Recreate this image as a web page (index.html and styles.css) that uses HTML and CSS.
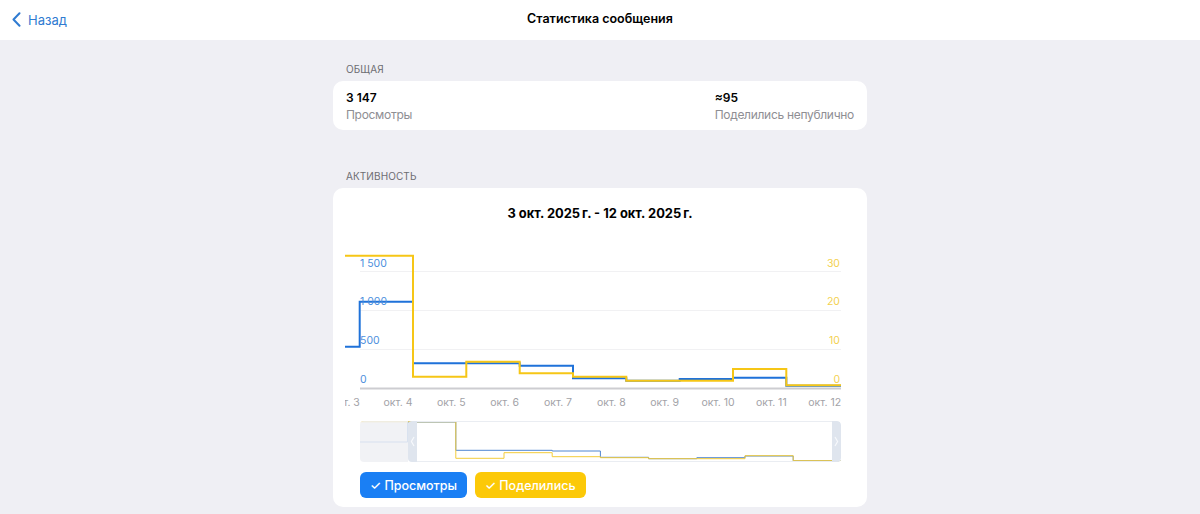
FILE: index.html
```html
<!DOCTYPE html>
<html lang="ru">
<head>
    <meta charset="UTF-8">
    <meta name="viewport" content="width=device-width,initial-scale=1">
    <title>Статистика сообщения</title>
    <link rel="stylesheet" href="styles.css">
</head>
<body>
    <header class="top">
        <a class="back" href="javascript:;">
            <svg width="9" height="15" viewBox="0 0 9 15"><path d="M7.5 1.2 L1.5 7.5 L7.5 13.8" fill="none" stroke="#2f7bd1" stroke-width="2" stroke-linecap="round" stroke-linejoin="round"/></svg>
            <span>Назад</span>
        </a>
        <h1 class="title">Статистика сообщения</h1>
        <span></span>
    </header>

    <main class="page">
        <h2 class="section">Общая</h2>
        <div class="card totals">
            <div class="total">
                <b>3 147</b>
                <span>Просмотры</span>
            </div>
            <div class="total">
                <b>≈95</b>
                <span>Поделились непублично</span>
            </div>
        </div>

        <h2 class="section gap">Активность</h2>
        <div class="card activity">
            <div class="range">3 окт. 2025&#8239;г. - 12 окт. 2025&#8239;г.</div>

            <!-- основной график -->
            <svg class="chart" width="534" height="172" viewBox="0 0 534 172">
                <defs>
                    <clipPath id="plot"><rect x="12" y="0" width="496" height="172"/></clipPath>
                </defs>
                <g class="grid">
                    <line x1="27" y1="31.5" x2="508" y2="31.5"/>
                    <line x1="27" y1="70.5" x2="508" y2="70.5"/>
                    <line x1="27" y1="109.5" x2="508" y2="109.5"/>
                </g>
                <line class="axis" x1="27" y1="148.5" x2="508" y2="148.5"/>
                <g clip-path="url(#plot)">
                    <path class="line blue" d="M0 106.7 H26.7 V61.7 H80 V123.3 H186.7 V125.7 H240 V138.3 H293.3 V140.7 H346.7 V139 H400 V137.7 H453.3 V145.7 H520"/>
                    <path class="line yellow" d="M0 15.7 H80 V136.7 H133.3 V121.7 H186.7 V133.3 H240 V136.7 H293.3 V140.7 H400 V129 H453.3 V145.3 H520"/>
                    <g class="days">
                        <text x="12.5" y="166">окт. 3</text>
                        <text x="65" y="166">окт. 4</text>
                        <text x="118.3" y="166">окт. 5</text>
                        <text x="171.7" y="166">окт. 6</text>
                        <text x="225" y="166">окт. 7</text>
                        <text x="278.3" y="166">окт. 8</text>
                        <text x="331.7" y="166">окт. 9</text>
                        <text x="385" y="166">окт. 10</text>
                        <text x="438.3" y="166">окт. 11</text>
                        <text x="491.7" y="166">окт. 12</text>
                    </g>
                </g>
                <g class="ticks left">
                    <text x="27" y="26.5">1 500</text>
                    <text x="27" y="65">1 000</text>
                    <text x="27" y="104">500</text>
                    <text x="27" y="143">0</text>
                </g>
                <g class="ticks right">
                    <text x="507" y="26.5">30</text>
                    <text x="507" y="65">20</text>
                    <text x="507" y="104">10</text>
                    <text x="507" y="143">0</text>
                </g>
            </svg>

            <!-- обзор -->
            <svg class="mini" width="481" height="41" viewBox="0 0 481 41">
                <defs>
                    <clipPath id="miniclip"><rect x="0" y="0" width="481" height="41" rx="4"/></clipPath>
                </defs>
                <g clip-path="url(#miniclip)">
                    <path class="mline blue" d="M0 21 H47.6 V1 H95.8 V29.3 H192.2 V30 H240.4 V36.3 H288.6 V37.7 H336.8 V36.7 H385 V35 H433.2 V39.7 H481"/>
                    <path class="mline yellow" d="M0 0.8 H95.8 V37.3 H144 V31.7 H192.2 V35.7 H240.4 V36.7 H288.6 V37.7 H385 V34.7 H433.2 V39.7 H481"/>
                    <rect class="shade" x="0" y="0" width="48" height="41"/>
                    <line class="frame" x1="57" y1="0.5" x2="472" y2="0.5"/>
                    <line class="frame" x1="57" y1="40.5" x2="472" y2="40.5"/>
                    <path class="handle" d="M52 0 H57 V41 H52 A4 4 0 0 1 48 37 V4 A4 4 0 0 1 52 0 Z"/>
                    <path class="handle" d="M472 0 H477 A4 4 0 0 1 481 4 V37 A4 4 0 0 1 477 41 H472 Z"/>
                    <path class="grip" d="M54 16 L51.4 20.5 L54 25"/>
                    <path class="grip" d="M475 16 L477.6 20.5 L475 25"/>
                </g>
            </svg>

            <div class="toggles">
                <button class="toggle views">✓ Просмотры</button>
                <button class="toggle shares">✓ Поделились</button>
            </div>
        </div>
    </main>
</body>
</html>
```

FILE: styles.css
```css
/* reset */
body{
    margin: 0;
    background: #efeff4;
    font-family: Inter, "Noto Sans", sans-serif;
    color: #000;
    -webkit-font-smoothing: antialiased;
}
h1,h2{
    margin: 0;
    font-weight: normal;
}
button{
    -webkit-appearance: none;
    border: 0;
    font-family: inherit;
}

/* шапка */
.top{
    height: 40px;
    background: #fff;
    display: grid;
    grid-template-columns: 1fr auto 1fr;
    align-items: center;
    padding: 0 12px;
}
.back{
    display: flex;
    align-items: center;
    gap: 7px;
    color: #2f7bd1;
    text-decoration: none;
    font-size: 13px;
}
.back svg{
    display: block;
    margin-top: -1px;
}
.title{
    font-size: 12.5px;
    font-weight: 600;
    margin-top: -4px;
}

/* страница */
.page{
    width: 534px;
    margin: 0 auto;
    padding-top: 22px;
}
.section{
    font-size: 10px;
    line-height: 14px;
    color: #6d6d72;
    text-transform: uppercase;
    letter-spacing: 0.1px;
    margin: 0 13px 5px;
}
.section.gap{
    margin-top: 39px;
}
.card{
    background: #fff;
    border-radius: 10px;
}
.totals{
    display: flex;
    justify-content: space-between;
    padding: 8px 13px 6px;
}
.total b{
    display: block;
    font-size: 12px;
    line-height: 17px;
    font-weight: 600;
}
.total span{
    display: block;
    font-size: 12px;
    line-height: 18px;
    color: #8e8e93;
    letter-spacing: -0.3px;
}

/* активность */
.activity{
    padding: 16px 0 9px;
}
.range{
    text-align: center;
    font-size: 12.9px;
    line-height: 20px;
    font-weight: 700;
}
.chart{
    display: block;
    margin-top: 16px;
}
.chart text{
    font-family: Inter, "Noto Sans", sans-serif;
    font-size: 10.5px;
}
.grid line{
    stroke: #f1f1f3;
    stroke-width: 1;
}
.axis{
    stroke: #cdcdd1;
    stroke-width: 2;
}
.line{
    fill: none;
    stroke-width: 2;
}
.line.blue{
    stroke: #1f72d9;
}
.line.yellow{
    stroke: #f6c616;
}
.days text{
    fill: #a2a2a7;
    text-anchor: middle;
}
.ticks.left text{
    fill: #4d8fdd;
}
.ticks.right text{
    fill: #f3d14f;
    text-anchor: end;
}

.mini{
    display: block;
    margin: 9px 0 0 27px;
}
.mline{
    fill: none;
    stroke-width: 1;
}
.mline.blue{
    stroke: #4f86d2;
}
.mline.yellow{
    stroke: #f3cc3b;
}
.shade{
    fill: #eff0f3;
    opacity: 0.85;
}
.frame{
    stroke: #eaedf2;
    stroke-width: 1;
}
.handle{
    fill: #dfe5ee;
}
.grip{
    fill: none;
    stroke: #f7f9fc;
    stroke-width: 1.2;
}

.toggles{
    display: flex;
    gap: 8px;
    margin: 10px 0 0 27px;
}
.toggle{
    height: 26px;
    padding: 0 10px;
    border-radius: 6px;
    color: #fff;
    font-size: 12.5px;
    font-weight: 500;
}
.toggle.views{
    background: #1a7ff4;
}
.toggle.shares{
    background: #fcc908;
}
```
